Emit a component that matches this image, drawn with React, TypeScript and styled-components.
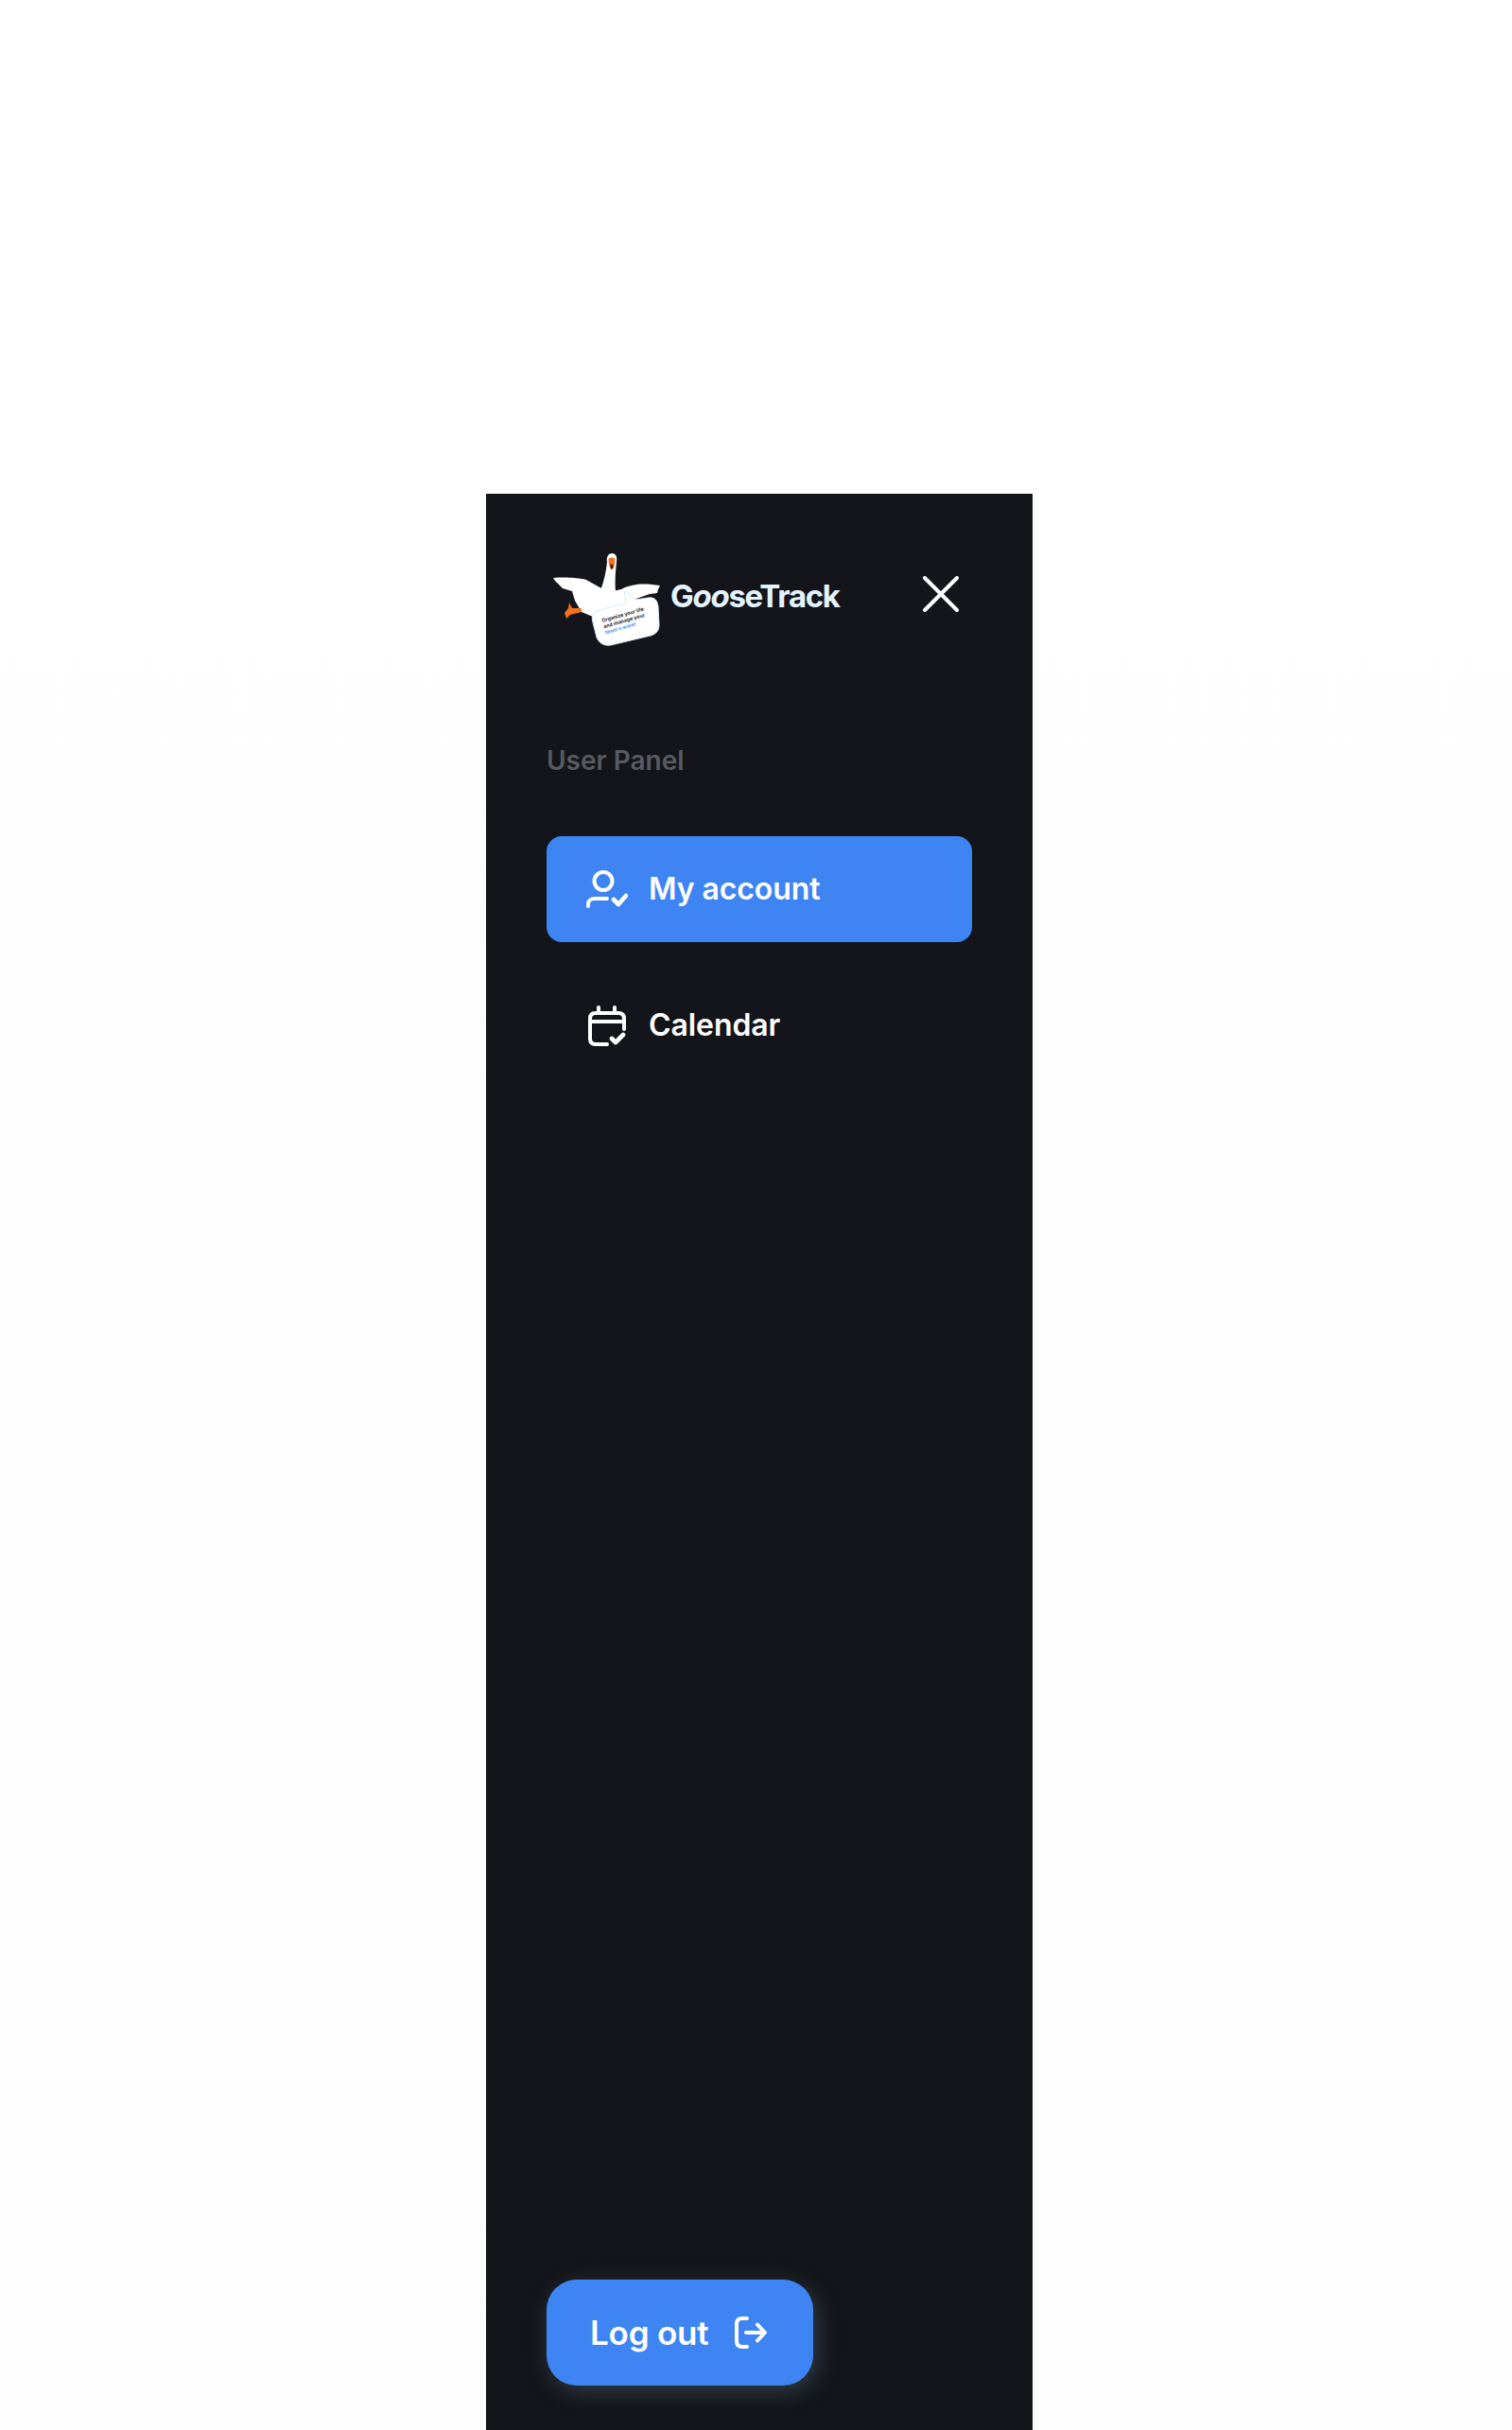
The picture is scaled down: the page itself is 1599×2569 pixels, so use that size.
import styled, { createGlobalStyle } from 'styled-components';

const GlobalStyle = createGlobalStyle`
  html, body {
    margin: 0;
    padding: 0;
    background: #ffffff;
    font-family: Inter, "Liberation Sans", sans-serif;
  }
`;

function GooseLogo() {
  return (
    <LogoSvg viewBox="0 0 116 100" aria-hidden="true">
      {/* neck and head */}
      <path d="M51 40 C55 30 57 20 58 10 C57 4 60 1 63 1 C67 1 69 4 68 10 C67 20 66 30 67 42 L60 52 Z" fill="#fff" />
      <path d="M59.5 7 C60 5 66 5 66.5 7 L66 13 L64 18 L62 18 L60 13 Z" fill="#f2701f" />
      <ellipse cx="63" cy="15" rx="1.5" ry="2.4" fill="#3a1a10" />
      {/* wings and body */}
      <path d="M1 27 C14 26 28 27 36 29 L54 39 L64 41 L73 39 C78 36 84 35 89 34 C98 33 106 34 114 35 L112 39 L111 43 L103 44 L89 49 L60 72 L43 68 L31 63 L24 51 L21 41 L11 38 L3 30 Z" fill="#fff" />
      {/* foot */}
      <path d="M18 53 L21 59 L31 59 L31 63 L19 66 L15 70 L13 64 L17 59 Z" fill="#f2701f" />
      {/* speech bubble */}
      <path d="M50 61 L78 54 L76 41 L88 50 L101 48 C108 47 111 50 112 57 L113 76 C113 83 110 86 104 88 L62 98 C54 99 50 96 47 90 L43 74 C41 67 43 63 50 61 Z" fill="#fff" stroke="#d8e9fb" strokeWidth="1" />
      <g transform="rotate(-16 53 74)" fontFamily="Inter, sans-serif" fontWeight="600" fontSize="5.4">
        <text x="53" y="74" fill="#111">Organize your life</text>
        <text x="53" y="80.5" fill="#111">and manage your</text>
        <text x="53" y="87" fill="#3e85f3">team's work!</text>
      </g>
    </LogoSvg>
  );
}

function CloseIcon() {
  return (
    <CloseSvg viewBox="0 0 38 38" fill="none" stroke="#fff" strokeWidth="4" strokeLinecap="round" aria-hidden="true">
      <path d="M2 2 L36 36 M36 2 L2 36" />
    </CloseSvg>
  );
}

function UserCheckIcon() {
  return (
    <UserSvg viewBox="0 0 44 40" fill="none" stroke="#fff" strokeWidth="4" strokeLinecap="round" strokeLinejoin="round" aria-hidden="true">
      <circle cx="18" cy="11.5" r="9.5" />
      <path d="M2 38 V36 C2 32 5 30 9 30 H22" />
      <path d="M29 31 L34 36 L42 27" strokeWidth="4.6" />
    </UserSvg>
  );
}

function CalendarCheckIcon() {
  return (
    <CalendarSvg viewBox="0 0 40 43" fill="none" stroke="#fff" strokeWidth="4" strokeLinecap="round" strokeLinejoin="round" aria-hidden="true">
      <path d="M38 25 V14 C38 10 36 8 32 8 H8 C4 8 2 10 2 14 V35 C2 39 4 41 8 41 H20" />
      <path d="M11 2 V8 M28 2 V8 M2 17 H38" />
      <path d="M25 35 L29 39 L37 31" strokeWidth="4.6" />
    </CalendarSvg>
  );
}

function LogoutIcon() {
  return (
    <LogoutSvg viewBox="0 0 34 34" fill="none" stroke="#fff" strokeWidth="4" strokeLinecap="round" strokeLinejoin="round" aria-hidden="true">
      <path d="M13 2 H8 C4 2 2 4 2 8 V26 C2 30 4 32 8 32 H13" />
      <path d="M12 17 H32 M24 8.5 L32 17 L24 25.5" />
    </LogoutSvg>
  );
}

export default function App() {
  return (
    <>
      <GlobalStyle />
      <Page>
        <Sidebar>
          <Top>
            <Brand>
              <GooseLogo />
              <BrandName>
                G<i>oo</i>seTrack
              </BrandName>
            </Brand>
            <CloseButton type="button" aria-label="Close">
              <CloseIcon />
            </CloseButton>
          </Top>
          <PanelLabel>User Panel</PanelLabel>
          <NavList>
            <NavItem $active>
              <NavIconSlot>
                <UserCheckIcon />
              </NavIconSlot>
              <NavText>My account</NavText>
            </NavItem>
            <NavItem>
              <NavIconSlot>
                <CalendarCheckIcon />
              </NavIconSlot>
              <NavText>Calendar</NavText>
            </NavItem>
          </NavList>
          <LogoutButton type="button">
            Log out
            <LogoutIcon />
          </LogoutButton>
        </Sidebar>
      </Page>
    </>
  );
}

const Page = styled.div`
  height: 2569px;
  padding: 522px 0 0 514px;
  box-sizing: border-box;
  display: flex;
  overflow: hidden;
  background: linear-gradient(#ffffff, #fdfdfd);
`;

const Sidebar = styled.aside`
  width: 578px;
  height: 2047px;
  box-sizing: border-box;
  padding: 62px 64px 47px;
  background: #13151a;
  display: flex;
  flex-direction: column;
`;

const Top = styled.div`
  display: flex;
  align-items: flex-start;
  justify-content: space-between;
`;

const Brand = styled.div`
  display: flex;
  align-items: center;
  margin-left: 6px;
`;

const LogoSvg = styled.svg`
  width: 116px;
  height: 100px;
  display: block;
`;

const BrandName = styled.span`
  margin: -9px 0 0 9px;
  font-family: Inter, sans-serif;
  font-size: 33px;
  font-weight: 700;
  letter-spacing: -1.3px;
  color: #e3f3ff;

  i {
    font-style: italic;
  }
`;

const CloseButton = styled.button`
  margin: 25px 14px 0 0;
  padding: 0;
  border: 0;
  background: none;
  display: flex;
`;

const CloseSvg = styled.svg`
  width: 38px;
  height: 38px;
  display: block;
`;

const PanelLabel = styled.div`
  margin-top: 103px;
  font-size: 28px;
  line-height: 34px;
  font-weight: 600;
  color: #585a62;
`;

const NavList = styled.nav`
  margin-top: 63px;
  display: flex;
  flex-direction: column;
  gap: 32px;
`;

const NavItem = styled.a<{ $active?: boolean }>`
  height: 112px;
  padding-left: 41px;
  border-radius: 16px;
  display: flex;
  align-items: center;
  gap: 21px;
  font-size: 32px;
  font-weight: 600;
  color: #ffffff;
  background: ${({ $active }) => ($active ? '#3e85f3' : 'transparent')};
`;

const NavText = styled.span`
  padding-bottom: 2px;
  letter-spacing: -0.08px;
`;

const NavIconSlot = styled.span`
  width: 46px;
  display: flex;
  align-items: center;
  justify-content: center;
`;

const UserSvg = styled.svg`
  width: 44px;
  height: 40px;
  display: block;
`;

const CalendarSvg = styled.svg`
  width: 40px;
  height: 43px;
  display: block;
`;

const LogoutButton = styled.button`
  margin-top: auto;
  align-self: flex-start;
  width: 282px;
  height: 112px;
  padding: 0 0 0 46px;
  border: 0;
  border-radius: 32px;
  background: #3e85f3;
  box-shadow: 4px 6px 24px rgba(136, 165, 191, 0.28);
  color: #ffffff;
  font-family: inherit;
  font-size: 35px;
  font-weight: 600;
  letter-spacing: -0.2px;
  display: flex;
  align-items: center;
  gap: 27px;
`;

const LogoutSvg = styled.svg`
  width: 34px;
  height: 34px;
  display: block;
`;
